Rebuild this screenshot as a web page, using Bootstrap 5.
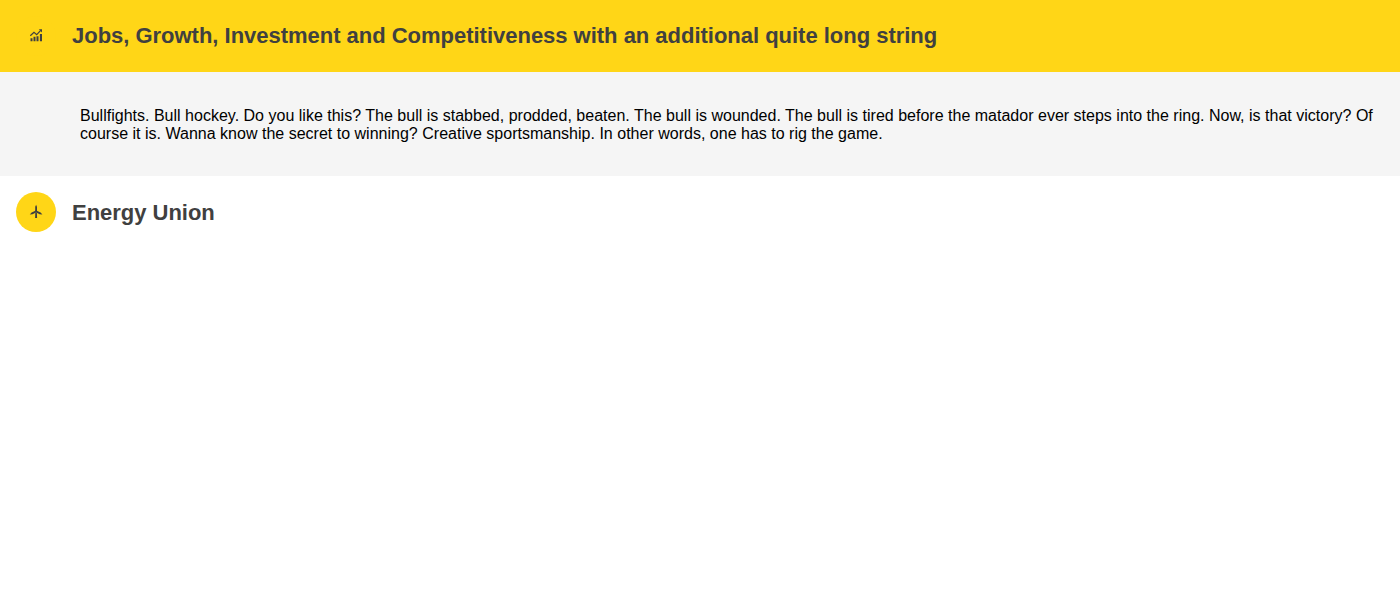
<!DOCTYPE html>
<html lang="en">
<head>
<meta charset="utf-8">
<meta name="viewport" content="width=device-width, initial-scale=1">
<title>Priorities</title>
<link href="https://cdn.jsdelivr.net/npm/bootstrap@5.3.0/dist/css/bootstrap.min.css" rel="stylesheet">
<style>
body { font-family: "Liberation Sans", Arial, sans-serif; background: #fff; color: #000; }
.topic-head { height: 72px; color: #404040; }
.topic-head.active { background: #ffd617; }
.topic-icon { width: 40px; height: 40px; background: #ffd617; color: #404040; }
.topic-title { font-size: 22px; line-height: 26px; font-weight: 700; letter-spacing: -.018px; }
.topic-head:not(.active) .topic-title { padding-top: 2px; }
.topic-body { background: #f5f5f5; height: 104px; padding: 35px 16px 0 80px; font-size: 16px; line-height: 18px; letter-spacing: .009px; }
</style>
</head>
<body>
<main>
  <section>
    <header class="topic-head active d-flex align-items-center px-3 gap-3">
      <span class="topic-icon rounded-circle d-flex align-items-center justify-content-center flex-shrink-0">
        <svg width="16" height="16" viewBox="0 0 16 16" fill="currentColor" aria-hidden="true">
          <path d="M2.5 10.2h2v3.1h-2zM5.5 8.8h2v4.5h-2zM8.5 8.3h2v5h-2zM11.9 6H14v7.3h-2.1z"/>
          <path d="M2.3 7.8 6 4.3l2.7 2.3 4-4.2" fill="none" stroke="currentColor" stroke-width="1.2"/>
          <path d="M10.8 1.2H14v3.4z"/>
        </svg>
      </span>
      <h2 class="topic-title mb-0">Jobs, Growth, Investment and Competitiveness with an additional quite long string</h2>
    </header>
    <div class="topic-body"><p class="mb-0">Bullfights. Bull hockey. Do you like this? The bull is stabbed, prodded, beaten. The bull is wounded. The bull is tired before the matador ever steps into the ring. Now, is that victory? Of course it is. Wanna know the secret to winning? Creative sportsmanship. In other words, one has to rig the game.</p></div>
  </section>
  <section>
    <header class="topic-head d-flex align-items-center px-3 gap-3">
      <span class="topic-icon rounded-circle d-flex align-items-center justify-content-center flex-shrink-0">
        <svg width="16" height="16" viewBox="0 0 16 16" fill="currentColor" aria-hidden="true">
          <path d="M8.1.8 9 2.8v4.4H7.2V2.8z"/>
          <path d="M7.4 6.7 8 8.4 4.6 10.3 1.8 10.6 3.6 8.5z"/>
          <path d="M8.8 6.7 8.2 8.4 11.6 10.3 14.4 10.6 12.6 8.5z"/>
          <path d="M7.3 8.7h1.6l.2 5.4h-2z"/>
          <circle cx="8.1" cy="7.4" r="1.1"/>
        </svg>
      </span>
      <h2 class="topic-title mb-0">Energy Union</h2>
    </header>
  </section>
</main>
<script src="https://cdn.jsdelivr.net/npm/bootstrap@5.3.0/dist/js/bootstrap.bundle.min.js"></script>
</body>
</html>
